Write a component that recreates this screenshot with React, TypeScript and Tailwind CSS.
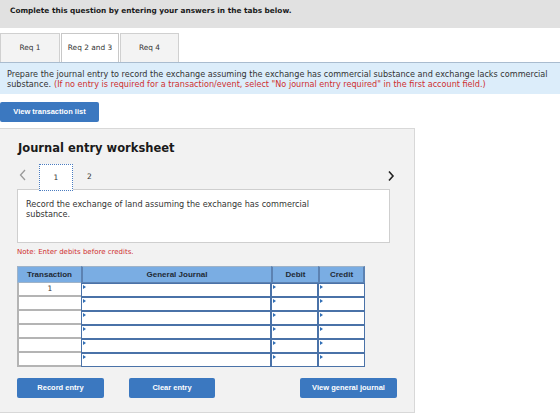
import React from "react";

const Marker = () => (
  <svg className="absolute left-[1px] top-[1px]" width="3" height="4" viewBox="0 0 3 4">
    <path d="M0 0 L3 2 L0 4 Z" fill="#2f6db5" />
  </svg>
);

const InputCell = () => (
  <div className="relative h-[14px] bg-white border border-[#4a72a8]">
    <Marker />
  </div>
);

export default function App() {
  const rows = [0, 1, 2, 3, 4, 5];
  return (
    <div className="w-[560px] h-[420px] bg-white overflow-hidden font-['DejaVu_Sans',Verdana,sans-serif] text-[#333]">
      <div className="h-[28px] bg-[#e1e1e1] pl-[10px] pt-[6px] text-[7.35px] leading-[9px] font-bold text-[#1a1a1a]">
        Complete this question by entering your answers in the tabs below.
      </div>
      <div className="mt-[5px] h-[29px] flex gap-[1px] text-[7.4px] text-[#333]">
        <div className="w-[60px] flex items-center justify-center bg-[#f3f3f3] border border-b-0 border-[#d0d0d0]">Req 1</div>
        <div className="w-[58px] flex items-center justify-center bg-white border border-b-0 border-[#c8c8c8]">Req 2 and 3</div>
        <div className="w-[59px] flex items-center justify-center bg-[#f3f3f3] border border-b-0 border-[#d0d0d0]">Req 4</div>
      </div>
      <div className="h-[32px] bg-[#dcedfa] border-t border-[#a9bccf] px-[7px] pt-[6px] text-[8.1px] leading-[10px] text-[#333]">
        <div className="whitespace-nowrap">
          Prepare the journal entry to record the exchange assuming the exchange has commercial substance and exchange lacks commercial
        </div>
        <div className="flex whitespace-nowrap">
          <span>substance.</span>
          <span className="ml-[3px] text-[#cf2f2f]">(If no entry is required for a transaction/event, select "No journal entry required" in the first account field.)</span>
        </div>
      </div>
      <div className="mt-[8px] w-[99px] h-[20px] rounded-[2px] bg-[#3b78c0] flex items-center justify-center text-white font-bold text-[7.5px] font-['Liberation_Sans',Arial,sans-serif]">
        View transaction list
      </div>
      <div className="mt-[6px] w-[415px] h-[285px] bg-[#f2f2f2] border border-l-0 border-[#d8d8d8] pl-[17px] pt-[12px]">
        <div className="text-[11.5px] leading-[15px] font-bold text-[#1a1a1a] pl-[1px]">Journal entry worksheet</div>
        <div className="mt-[8px] w-[380px] h-[25px] flex items-start justify-between">
          <div className="flex items-start">
            <svg className="mt-[5px] ml-[2px]" width="8" height="12" viewBox="0 0 8 12">
              <path d="M6 1 L1.5 6 L6 11" fill="none" stroke="#9a9a9a" strokeWidth="1.3" />
            </svg>
            <div className="relative z-10 ml-[12px] w-[34px] h-[27px] bg-white border border-dotted border-[#4a7cc0] flex items-center justify-center text-[7.5px] text-[#333]">1</div>
            <div className="ml-[14px] h-[25px] flex items-center text-[7.5px] text-[#333]">2</div>
          </div>
          <svg className="mt-[6px] mr-[2px]" width="8" height="12" viewBox="0 0 8 12">
            <path d="M2 1.5 L6 6 L2 10.5" fill="none" stroke="#222" strokeWidth="1.6" />
          </svg>
        </div>
        <div className="w-[373px] h-[54px] bg-white border border-[#cfcfcf] px-[8px] pt-[9px] text-[8.15px] leading-[10px] text-[#333]">
          <p className="w-[295px]">Record the exchange of land assuming the exchange has commercial substance.</p>
        </div>
        <div className="mt-[5px] text-[7px] leading-[9px] text-[#cf2f2f]">Note: Enter debits before credits.</div>
        <div className="mt-[9px] w-[348px] grid grid-cols-[64px_190px_47px_47px] font-['Liberation_Sans',Arial,sans-serif]">
          <div className="h-[17px] bg-[#7aade3] border border-r-0 border-[#9fb3c8] flex items-center justify-center text-[8px] font-bold text-[#1f2a36]">Transaction</div>
          <div className="h-[17px] bg-[#7aade3] border-y border-l-2 border-[#5c82b2] border-t-[#9fb3c8] flex items-center justify-center text-[8px] font-bold text-[#1f2a36]">General Journal</div>
          <div className="h-[17px] bg-[#7aade3] border-y border-l-2 border-[#5c82b2] border-t-[#9fb3c8] flex items-center justify-center text-[8px] font-bold text-[#1f2a36]">Debit</div>
          <div className="h-[17px] bg-[#7aade3] border-y border-x-2 border-[#5c82b2] border-t-[#9fb3c8] flex items-center justify-center text-[8px] font-bold text-[#1f2a36]">Credit</div>
          {rows.map((r) => (
            <React.Fragment key={r}>
              <div className="h-[14px] bg-white border-l-2 border-b-2 border-[#b4b4b4] flex items-center justify-center text-[7.5px] text-[#333] font-['DejaVu_Sans',sans-serif]">
                {r === 0 ? "1" : ""}
              </div>
              <InputCell />
              <InputCell />
              <InputCell />
            </React.Fragment>
          ))}
        </div>
        <div className="mt-[11px] flex font-['Liberation_Sans',Arial,sans-serif] text-white font-bold text-[7.5px]">
          <div className="w-[87px] h-[20px] rounded-[2px] bg-[#3b78c0] flex items-center justify-center">Record entry</div>
          <div className="ml-[25px] w-[86px] h-[20px] rounded-[2px] bg-[#3b78c0] flex items-center justify-center">Clear entry</div>
          <div className="ml-[85px] w-[97px] h-[20px] rounded-[2px] bg-[#3b78c0] flex items-center justify-center">View general journal</div>
        </div>
      </div>
    </div>
  );
}
